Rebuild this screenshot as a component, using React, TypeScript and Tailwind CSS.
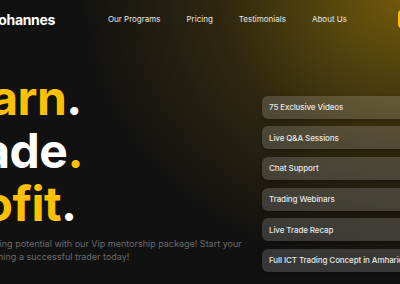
import React from 'react';

const navLinks = ['Our Programs', 'Pricing', 'Testimonials', 'About Us'];

const features = [
  '75 Exclusive Videos',
  'Live Q&A Sessions',
  'Chat Support',
  'Trading Webinars',
  'Live Trade Recap',
  'Full ICT Trading Concept in Amharic',
];

const App: React.FC = () => {
  return (
    <div
      className="relative w-[400px] h-[284px] overflow-hidden bg-[#111111] text-white"
      style={{ fontFamily: 'Inter, "Open Sans", sans-serif' }}
    >
      {/* top-right glow */}
      <div className="absolute inset-0 bg-[radial-gradient(ellipse_320px_270px_at_100%_0%,rgba(255,196,0,0.4),rgba(255,196,0,0.13)_55%,transparent_100%)]" />

      <div className="relative">
        {/* Navbar */}
        <header className="flex items-center h-[38px]">
          <div className="ml-[-10px] text-[14px] font-bold tracking-tight">Yohannes</div>
          <nav className="flex items-center ml-[53px] gap-[26px]">
            {navLinks.map((link) => (
              <a key={link} className="text-[8px] text-[#e8e8e8] whitespace-nowrap">
                {link}
              </a>
            ))}
          </nav>
          <button className="ml-[51px] shrink-0 h-[20px] w-[80px] rounded-[5px] bg-[#ffc000]" />
        </header>

        {/* Hero */}
        <div className="flex mt-[33px]">
          <div className="w-[262px] shrink-0">
            <h1 className="ml-[-65px] text-[48px] font-bold leading-[53px] tracking-[-0.5px] whitespace-nowrap">
              <div>
                <span className="text-[#ffc000]">Learn</span>.
              </div>
              <div>
                Trade<span className="text-[#ffc000]">.</span>
              </div>
              <div>
                <span className="text-[#ffc000]">Profit</span>.
              </div>
            </h1>
            <p className="ml-[-71px] mt-[8px] text-[9px] leading-[12.5px] text-[#6b6b6b] whitespace-nowrap">
              Unlock your trading potential with our Vip mentorship package! Start your
              <br />
              journey to becoming a successful trader today!
            </p>
          </div>

          {/* Features */}
          <div className="mt-[24.5px] flex flex-col gap-[7.7px] w-[170px] shrink-0">
            {features.map((f) => (
              <div
                key={f}
                className="h-[23px] flex items-center px-[7px] rounded-[6px] bg-white/[0.16] shadow-[0_2px_4px_rgba(0,0,0,0.3)] text-[8px] font-medium tracking-[-0.1px] text-[#e6e6e6] whitespace-nowrap"
              >
                {f}
              </div>
            ))}
          </div>
        </div>
      </div>
    </div>
  );
};

export default App;
